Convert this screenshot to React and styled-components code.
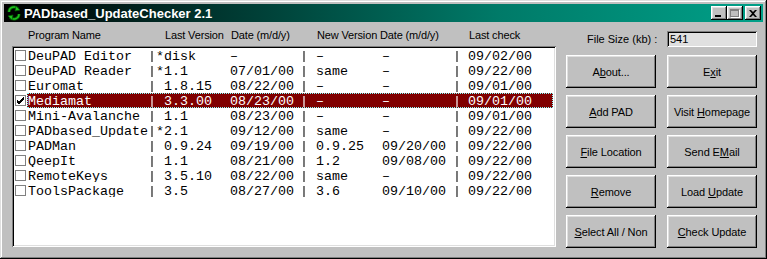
import styled, { createGlobalStyle } from "styled-components";

const GlobalStyle = createGlobalStyle`
  html, body {
    margin: 0;
    padding: 0;
    background: #c0c0c0;
  }
  * {
    box-sizing: border-box;
  }
`;

const programs = [
	{ name: "DeuPAD Editor", ver: "*disk", date: "–", newVer: "–", newDate: "–", last: "09/02/00" },
	{ name: "DeuPAD Reader", ver: "*1.1", date: "07/01/00", newVer: "same", newDate: "–", last: "09/22/00" },
	{ name: "Euromat", ver: " 1.8.15", date: "08/22/00", newVer: "–", newDate: "–", last: "09/01/00" },
	{ name: "Mediamat", ver: " 3.3.00", date: "08/23/00", newVer: "–", newDate: "–", last: "09/01/00", checked: true, selected: true },
	{ name: "Mini-Avalanche", ver: " 1.1", date: "08/23/00", newVer: "–", newDate: "–", last: "09/01/00" },
	{ name: "PADbased_Update", ver: "*2.1", date: "09/12/00", newVer: "same", newDate: "–", last: "09/22/00" },
	{ name: "PADMan", ver: " 0.9.24", date: "09/19/00", newVer: "0.9.25", newDate: "09/20/00", last: "09/22/00" },
	{ name: "QeepIt", ver: " 1.1", date: "08/21/00", newVer: "1.2", newDate: "09/08/00", last: "09/22/00" },
	{ name: "RemoteKeys", ver: " 3.5.10", date: "08/22/00", newVer: "same", newDate: "–", last: "09/22/00" },
	{ name: "ToolsPackage", ver: " 3.5", date: "08/27/00", newVer: "3.6", newDate: "09/10/00", last: "09/22/00" },
];

const buttons = [
	["A", "b", "out..."],
	["E", "x", "it"],
	["", "A", "dd PAD"],
	["Visit ", "H", "omepage"],
	["", "F", "ile Location"],
	["Send E", "M", "ail"],
	["", "R", "emove"],
	["Load ", "U", "pdate"],
	["", "S", "elect All / Non"],
	["", "C", "heck Update"],
];

function TitleIcon() {
	return (
		<svg width="16" height="16" viewBox="0 0 16 16">
			<path d="M3 7 A5 5 0 0 1 12 4" fill="none" stroke="#006000" strokeWidth="3" />
			<path d="M3 7 A5 5 0 0 1 12 4" fill="none" stroke="#20c020" strokeWidth="1.5" />
			<polygon points="10,1 14,5 9,6" fill="#20c020" stroke="#006000" strokeWidth="0.8" />
			<path d="M13 9 A5 5 0 0 1 4 12" fill="none" stroke="#006000" strokeWidth="3" />
			<path d="M13 9 A5 5 0 0 1 4 12" fill="none" stroke="#20c020" strokeWidth="1.5" />
			<polygon points="6,15 2,11 7,10" fill="#20c020" stroke="#006000" strokeWidth="0.8" />
		</svg>
	);
}

function CheckMark() {
	return (
		<svg width="9" height="9" viewBox="0 0 9 9">
			<path d="M1 4 L3 6 L8 1 M1 5 L3 7 L8 2 M1 6 L3 8 L8 3" fill="none" stroke="#000" strokeWidth="1" />
		</svg>
	);
}

function ProgramRow({ item }) {
	return (
		<Row>
			<CheckCell>
				<CheckBox>{item.checked && <CheckMark />}</CheckBox>
			</CheckCell>
			<RowBody $selected={item.selected}>
				<span>{item.name}</span>
				<Sep>|</Sep>
				<span>{item.ver}</span>
				<span>{item.date}</span>
				<Sep>|</Sep>
				<NewVer>{item.newVer}</NewVer>
				<span>{item.newDate}</span>
				<Sep>|</Sep>
				<LastCheck>{item.last}</LastCheck>
			</RowBody>
		</Row>
	);
}

export default function App() {
	return (
		<>
			<GlobalStyle />
			<Window>
				<TitleBar>
					<TitleIcon />
					<TitleText>PADbased_UpdateChecker 2.1</TitleText>
					<TitleButtons>
						<CaptionButton aria-label="minimize">
							<MinGlyph />
						</CaptionButton>
						<CaptionButton aria-label="maximize">
							<MaxGlyph />
						</CaptionButton>
						<CaptionButton aria-label="close" $gap>
							<svg width="8" height="7" viewBox="0 0 8 7">
								<path d="M0 0 L2 0 L4 2 L6 0 L8 0 L5 3.5 L8 7 L6 7 L4 5 L2 7 L0 7 L3 3.5 Z" fill="#000" />
							</svg>
						</CaptionButton>
					</TitleButtons>
				</TitleBar>
				<Body>
					<LeftPanel>
						<HeaderRow>
							<HeaderCell $w={137}>Program Name</HeaderCell>
							<HeaderCell $w={66}>Last Version</HeaderCell>
							<HeaderCell $w={86}>Date (m/d/y)</HeaderCell>
							<HeaderCell $w={63}>New Version</HeaderCell>
							<HeaderCell $w={89}>Date (m/d/y)</HeaderCell>
							<HeaderCell>Last check</HeaderCell>
						</HeaderRow>
						<ListBox>
							{programs.map((p) => (
								<ProgramRow key={p.name} item={p} />
							))}
						</ListBox>
					</LeftPanel>
					<RightPanel>
						<SizeRow>
							<SizeLabel>File Size (kb) :</SizeLabel>
							<SizeField>541</SizeField>
						</SizeRow>
						<ButtonGrid>
							{buttons.map(([pre, key, post]) => (
								<Button key={pre + key + post}>
									<span>
										{pre}
										<u>{key}</u>
										{post}
									</span>
								</Button>
							))}
						</ButtonGrid>
					</RightPanel>
				</Body>
			</Window>
		</>
	);
}

const Window = styled.div`
  width: 767px;
  height: 259px;
  padding: 4px;
  background: #c0c0c0;
  box-shadow: inset -1px -1px #000, inset 1px 1px #dfdfdf, inset -2px -2px #808080,
    inset 2px 2px #fff;
  display: flex;
  flex-direction: column;
  font-family: "Liberation Sans", Arial, sans-serif;
  font-size: 11px;
  color: #000;
`;

const TitleBar = styled.div`
  height: 18px;
  display: flex;
  align-items: center;
  padding: 0 2px;
  background: linear-gradient(90deg, #000 0%, #00302a 25%, #007a68 65%, #00a088 100%);
`;

const TitleText = styled.span`
  margin-left: 2px;
  color: #fff;
  font-weight: bold;
  font-size: 13px;
  white-space: nowrap;
`;

const TitleButtons = styled.div`
  margin-left: auto;
  display: flex;
`;

const CaptionButton = styled.div`
  width: 16px;
  height: 14px;
  margin-left: ${(p) => (p.$gap ? "2px" : "0")};
  background: #c0c0c0;
  box-shadow: inset -1px -1px #000, inset 1px 1px #fff, inset -2px -2px #808080,
    inset 2px 2px #dfdfdf;
  display: flex;
  align-items: center;
  justify-content: center;
`;

const MinGlyph = styled.div`
  width: 6px;
  height: 2px;
  background: #000;
  margin: 6px 3px 0 0;
`;

const MaxGlyph = styled.div`
  width: 9px;
  height: 8px;
  border: 1px solid #808080;
  border-top-width: 2px;
  box-shadow: 1px 1px #fff;
  margin-right: 1px;
`;

const Body = styled.div`
  flex: 1;
  display: flex;
  gap: 10px;
  padding: 0 6px 0 8px;
`;

const LeftPanel = styled.div`
  width: 545px;
  display: flex;
  flex-direction: column;
`;

const HeaderRow = styled.div`
  height: 24px;
  display: flex;
  align-items: center;
  padding: 2px 0 0 16px;
  white-space: nowrap;
  letter-spacing: -0.15px;
`;

const HeaderCell = styled.span`
  width: ${(p) => (p.$w ? `${p.$w}px` : "auto")};
`;

const ListBox = styled.div`
  height: 201px;
  padding: 2px;
  background: #fff;
  box-shadow: inset 1px 1px #808080, inset -1px -1px #fff, inset 2px 2px #000,
    inset -2px -2px #dfdfdf;
  font-family: "Liberation Mono", "Courier New", monospace;
  font-size: 13.33px;
`;

const Row = styled.div`
  height: 15px;
  display: flex;
`;

const CheckCell = styled.div`
  width: 13px;
  display: flex;
  align-items: center;
  padding-left: 1px;
`;

const CheckBox = styled.div`
  width: 11px;
  height: 11px;
  border: 1px solid #808080;
  background: #fff;
  display: flex;
  align-items: center;
  justify-content: center;
`;

const RowBody = styled.div`
  flex: 1;
  margin-right: 1px;
  padding-top: 1px;
  line-height: 13px;
  border: 1px dotted ${(p) => (p.$selected ? "#80ffff" : "transparent")};
  background: ${(p) => (p.$selected ? "#800000" : "transparent")};
  color: ${(p) => (p.$selected ? "#fff" : "#000")};
  display: grid;
  grid-template-columns: 120px 8px 74px 70px 8px 74px 71px 8px 1fr;
  white-space: pre;
  overflow: hidden;
`;

const Sep = styled.span`
  text-align: center;
  filter: grayscale(1);
`;

const NewVer = styled.span`
  padding-left: 8px;
`;

const LastCheck = styled.span`
  padding-left: 7px;
`;

const RightPanel = styled.div`
  flex: 1;
  display: flex;
  flex-direction: column;
  padding-top: 9px;
`;

const SizeRow = styled.div`
  height: 16px;
  display: grid;
  grid-template-columns: 90px 90px;
  column-gap: 11px;
  align-items: center;
`;

const SizeLabel = styled.span`
  padding-left: 21px;
  white-space: nowrap;
`;

const SizeField = styled.div`
  height: 16px;
  padding: 2px 3px;
  line-height: 12px;
  background: #e0e0e0;
  box-shadow: inset 1px 1px #808080, inset -1px -1px #fff, inset 2px 2px #000,
    inset -2px -2px #dfdfdf;
`;

const ButtonGrid = styled.div`
  margin-top: 8px;
  display: grid;
  grid-template-columns: 90px 90px;
  grid-auto-rows: 33px;
  column-gap: 11px;
  row-gap: 7px;
`;

const Button = styled.div`
  display: flex;
  align-items: center;
  justify-content: center;
  background: #c0c0c0;
  box-shadow: inset -1px -1px #000, inset 1px 1px #fff, inset -2px -2px #808080,
    inset 2px 2px #dfdfdf;
  white-space: nowrap;
  font-size: 11px;
  letter-spacing: -0.1px;
`;
